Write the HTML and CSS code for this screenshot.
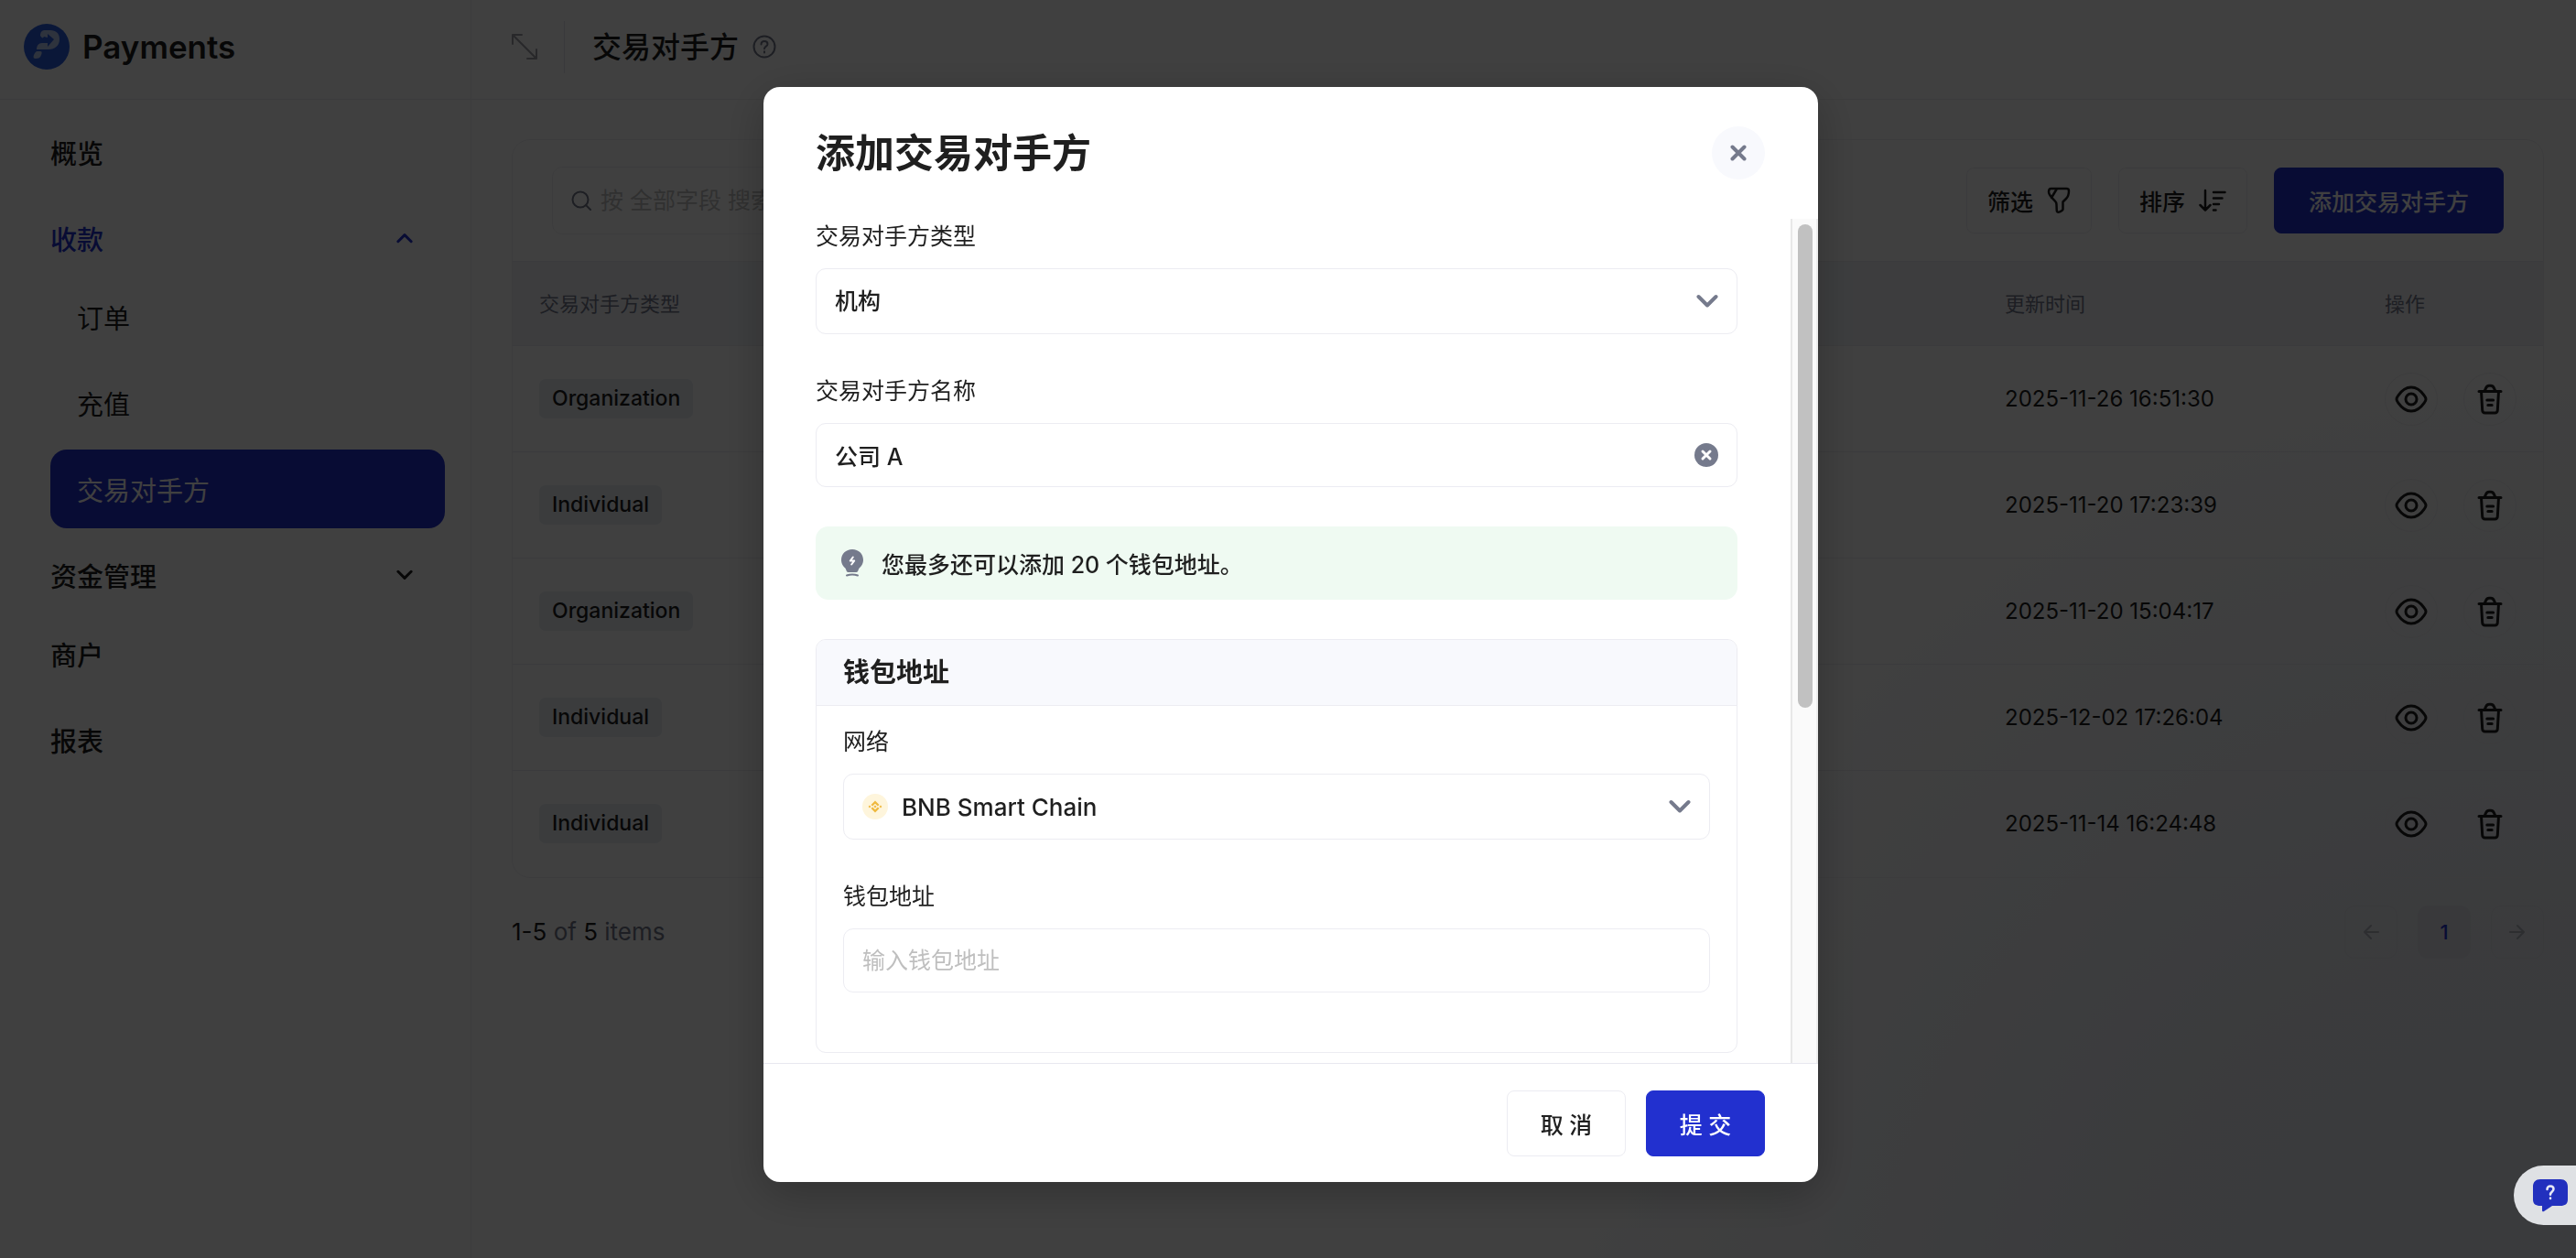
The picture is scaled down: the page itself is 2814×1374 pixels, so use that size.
FILE: index.html
```html
<!DOCTYPE html>
<html lang="zh-CN">
<head>
  <meta charset="UTF-8" />
  <meta name="viewport" content="width=device-width, initial-scale=1.0"/>
  <title>交易对手方 - Payments</title>
  <link rel="stylesheet" href="styles.css">
</head>

<body>
  <!-- shared icons -->
  <svg width="0" height="0" class="sprite" aria-hidden="true">
    <symbol id="icon-eye" viewBox="0 0 36 30">
      <path d="M2 15c0-1.600.7-2.600 1.700-3.900C6.800 6.600 11.600 2 18 2s11.200 4.600 14.300 9.100c1 1.300 1.700 2.300 1.700 3.900s-.7 2.600-1.700 3.900C29.200 23.400 24.400 28 18 28S6.800 23.400 3.700 18.900C2.700 17.600 2 16.600 2 15z"/>
      <circle cx="18" cy="15" r="6"/>
    </symbol>
    <symbol id="icon-trash" viewBox="0 0 28 34">
      <path d="M2 8.500h24M4.500 8.500l1.200 20.500c.1 1.800 1 3 3 3h10.600c2 0 2.900-1.200 3-3l1.200-20.500M8 8.300l1.700-3.600C10.500 3 11.300 2.300 13 2.300h2c1.700 0 2.500.7 3.300 2.400L20 8.300M10.800 18h6.800M11.800 23.500h4.400"/>
    </symbol>
    <symbol id="icon-chevron" viewBox="0 0 24 16">
      <path d="M2.500 3l9.500 9.500L21.500 3"/>
    </symbol>
  </svg>

  <div class="layout">
    <aside class="sidebar">
      <div class="brand">
        <svg class="logo" viewBox="0 0 50 50">
          <circle cx="25" cy="25" r="25" fill="#2a5ee0"/>
          <path d="M18 13c0-4 2-6 5-6h6c6 0 10 3.500 10 9.500C39 24 34 28 27 28H14c0-4 2-7 6-7h6v4l7-8-7-6v4l-4-1c-1 2-2 2-4-1z" fill="#b9c9f2"/>
          <path d="M15 30h3c2 0 2 2 1 4-1 3-3 4-6 4-2 0-3-1-2-4 1-2 2-4 4-4z" fill="#b9c9f2"/>
        </svg>
        <span>Payments</span>
      </div>
      <nav>
        <a href="#">概览</a>
        <a href="#" class="parent open">收款
          <svg class="caret up"><use href="#icon-chevron"/></svg>
        </a>
        <a href="#" class="sub">订单</a>
        <a href="#" class="sub">充值</a>
        <a href="#" class="sub active">交易对手方</a>
        <a href="#" class="parent">资金管理
          <svg class="caret"><use href="#icon-chevron"/></svg>
        </a>
        <a href="#">商户</a>
        <a href="#">报表</a>
      </nav>
    </aside>

    <main>
      <header>
        <svg class="expand" viewBox="0 0 28 28"><path d="M1 11V1h10M1 1l26 26M17 27h10V17"/></svg>
        <span class="divider"></span>
        <h1>交易对手方</h1>
        <svg class="help" viewBox="0 0 26 26"><circle cx="13" cy="13" r="11.500"/><path d="M9.500 10.500c0-2 1.500-3.500 3.500-3.500s3.500 1.300 3.500 3.200c0 2.300-3.500 2.600-3.500 5M13 18.200v1.300"/></svg>
      </header>

      <div class="content">
        <section class="card">
          <div class="toolbar">
            <div class="search">
              <svg viewBox="0 0 22 22"><circle cx="10" cy="10" r="8.500"/><path d="M16 16l5 5"/></svg>
              <input type="text" placeholder="按 全部字段 搜索" aria-label="搜索">
            </div>
            <button type="button" class="btn">筛选
              <svg class="icon-filter" viewBox="0 0 26 30"><path d="M4.500 2h17C23.500 2 24 3 24 4.500c0 4.500-.5 6-3 8.500l-3.500 3.500v8c0 1.500-5.500 4.500-6.500 2.500-.7-1.500 0-7-.8-9.500-1-3-8.200-7-8.200-12C2 3.500 2.500 2 4.500 2zM11 2L5 12"/></svg>
            </button>
            <button type="button" class="btn">排序
              <svg class="icon-sort" viewBox="0 0 30 26"><path d="M7 2v21M1.500 18L7 23.500 12.500 18M16 4h12.500M16 10.500h9.500M16 17h6M16 23.500h2.500"/></svg>
            </button>
            <button type="button" class="btn btn-primary">添加交易对手方</button>
          </div>

          <table>
            <thead>
              <tr>
                <th class="col-type">交易对手方类型</th>
                <th class="col-time">更新时间</th>
                <th class="col-actions">操作</th>
              </tr>
            </thead>
            <tbody>
              <tr>
                <td><span class="tag">Organization</span></td>
                <td>2025-11-26 16:51:30</td>
                <td><div class="actions">
                  <button type="button" aria-label="查看"><svg class="eye"><use href="#icon-eye"/></svg></button>
                  <button type="button" aria-label="删除"><svg class="trash"><use href="#icon-trash"/></svg></button>
                </div></td>
              </tr>
              <tr>
                <td><span class="tag">Individual</span></td>
                <td>2025-11-20 17:23:39</td>
                <td><div class="actions">
                  <button type="button" aria-label="查看"><svg class="eye"><use href="#icon-eye"/></svg></button>
                  <button type="button" aria-label="删除"><svg class="trash"><use href="#icon-trash"/></svg></button>
                </div></td>
              </tr>
              <tr>
                <td><span class="tag">Organization</span></td>
                <td>2025-11-20 15:04:17</td>
                <td><div class="actions">
                  <button type="button" aria-label="查看"><svg class="eye"><use href="#icon-eye"/></svg></button>
                  <button type="button" aria-label="删除"><svg class="trash"><use href="#icon-trash"/></svg></button>
                </div></td>
              </tr>
              <tr>
                <td><span class="tag">Individual</span></td>
                <td>2025-12-02 17:26:04</td>
                <td><div class="actions">
                  <button type="button" aria-label="查看"><svg class="eye"><use href="#icon-eye"/></svg></button>
                  <button type="button" aria-label="删除"><svg class="trash"><use href="#icon-trash"/></svg></button>
                </div></td>
              </tr>
              <tr>
                <td><span class="tag">Individual</span></td>
                <td>2025-11-14 16:24:48</td>
                <td><div class="actions">
                  <button type="button" aria-label="查看"><svg class="eye"><use href="#icon-eye"/></svg></button>
                  <button type="button" aria-label="删除"><svg class="trash"><use href="#icon-trash"/></svg></button>
                </div></td>
              </tr>
            </tbody>
          </table>
        </section>

        <div class="pagination">
          <p><b>1-5</b> of <b>5</b> items</p>
          <button type="button" aria-label="上一页"><svg viewBox="0 0 18 18"><path d="M17 9H2M9 2L2 9l7 7"/></svg></button>
          <button type="button" class="current">1</button>
          <button type="button" aria-label="下一页"><svg viewBox="0 0 18 18"><path d="M1 9h15M9 2l7 7-7 7"/></svg></button>
        </div>
      </div>
    </main>
  </div>

  <div class="overlay">
    <form class="modal" role="dialog" aria-labelledby="modal-title">
      <div class="modal-header">
        <h2 id="modal-title">添加交易对手方</h2>
        <button type="button" class="close" aria-label="关闭"><svg viewBox="0 0 18 18"><path d="M2.500 2.500l13 13M15.500 2.500l-13 13"/></svg></button>
      </div>

      <div class="modal-body">
        <div class="fields">
          <div class="field">
            <label for="type">交易对手方类型</label>
            <div class="control select">
              <select id="type"><option>机构</option><option>个人</option></select>
              <svg class="arrow"><use href="#icon-chevron"/></svg>
            </div>
          </div>

          <div class="field">
            <label for="name">交易对手方名称</label>
            <div class="control">
              <input type="text" id="name" value="公司 A">
              <svg class="clear" viewBox="0 0 26 26"><circle cx="13" cy="13" r="13"/><path d="M9 9l8 8M17 9l-8 8"/></svg>
            </div>
          </div>

          <div class="notice">
            <svg viewBox="0 0 24 30">
              <path d="M12 0C5 0 0 5 0 11.500c0 4.500 2.300 7 4.300 9C5.500 22 5.500 25 7.500 25h9c2 0 2-3 3.200-4.500 2-2 4.300-4.500 4.300-9C24 5 19 0 12 0z" fill="#757a8c"/>
              <path d="M6 28.500c4-1.300 8-1.300 12 0" fill="none" stroke="#757a8c" stroke-width="2" stroke-linecap="round"/>
              <path d="M12.800 8.500l-3 4h4.400l-3 4" fill="none" stroke="#fff" stroke-width="2" stroke-linecap="round" stroke-linejoin="round"/>
            </svg>
            您最多还可以添加 20 个钱包地址。
          </div>

          <section class="wallet">
            <h3>钱包地址</h3>
            <div class="wallet-body">
              <div class="field">
                <label for="network">网络</label>
                <div class="control select">
                  <svg class="bnb" viewBox="0 0 28 28">
                    <circle cx="14" cy="14" r="14" fill="#fef5dc"/>
                    <path d="M9.500 12L14 7.500l4.500 4.500-1.600 1.600L14 10.700l-2.900 2.900zM9.500 16l1.600-1.600 2.900 2.900 2.900-2.900 1.600 1.600-4.500 4.500zM14 12.400l1.600 1.600-1.600 1.600-1.600-1.600zM8 12.600L9.400 14 8 15.400 6.600 14zM20 12.600l1.400 1.400-1.400 1.400-1.400-1.400z" fill="#efb93f"/>
                  </svg>
                  <select id="network"><option>BNB Smart Chain</option></select>
                  <svg class="arrow"><use href="#icon-chevron"/></svg>
                </div>
              </div>
              <div class="field">
                <label for="address">钱包地址</label>
                <div class="control">
                  <input type="text" id="address" placeholder="输入钱包地址">
                </div>
              </div>
            </div>
          </section>
        </div>
        <div class="scrollbar"><div class="thumb"></div></div>
      </div>

      <div class="modal-footer">
        <button type="button" class="btn">取 消</button>
        <button type="submit" class="btn btn-primary">提 交</button>
      </div>
    </form>
  </div>

  <button type="button" class="chat" aria-label="帮助">
    <svg viewBox="0 0 38 36">
      <path d="M8 0h22c5 0 8 3 8 8v14c0 5-3 7-8 7h-9l-9 6c-1 .7-2 .3-2-1v-5H8c-5 0-8-2-8-7V8c0-5 3-8 8-8z" fill="#2230be"/>
      <path d="M15.500 11c0-2 1.500-3.500 3.500-3.500s3.500 1.300 3.500 3.300c0 2.700-3.500 2.700-3.500 6M19 20.500v.5" fill="none" stroke="#e6e8f5" stroke-width="2.500" stroke-linecap="round"/>
    </svg>
  </button>
</body>
</html>
```

FILE: styles.css
```css
* {
  box-sizing: border-box;
}
body {
  margin: 0;
  font-family: Inter, "Noto Sans CJK SC", sans-serif;
  font-size: 25px;
  color: #1f1f1f;
  background: radial-gradient(circle at 100% 110%, #e4e8f0 0, #e9ecf3 500px, #fff 1150px);
}
.sprite {
  position: absolute;
}
svg {
  flex: none;
  fill: none;
  stroke-linecap: round;
  stroke-linejoin: round;
}
button, input, select {
  font: inherit;
  color: inherit;
}
button {
  padding: 0;
  cursor: pointer;
}

/* sidebar */
.layout {
  display: flex;
  min-height: 100vh;
}
.sidebar {
  flex: none;
  width: 515px;
  border-right: 1px solid #f0f0f4;
}
.brand {
  display: flex;
  align-items: center;
  gap: 14px;
  height: 109px;
  padding: 0 26px 6px;
  border-bottom: 1px solid #ececf2;
  font-size: 35px;
  font-weight: 600;
}
.logo {
  width: 50px;
  height: 50px;
}
nav {
  padding: 14px 28px 14px 55px;
}
nav a {
  display: flex;
  align-items: center;
  justify-content: space-between;
  height: 86px;
  margin-bottom: 8px;
  font-size: 29px;
  font-weight: 500;
  color: #1f1f1f;
  text-decoration: none;
  border-radius: 18px;
}
nav .parent {
  margin-bottom: 0;
  padding-right: 35px;
}
nav .open {
  color: #2230cf;
}
nav .sub {
  padding-left: 29px;
  font-weight: 400;
}
nav .active {
  background: #2230cf;
  color: #fff;
}
.caret {
  width: 18px;
  height: 12px;
  stroke: currentColor;
  stroke-width: 4;
}
.up {
  transform: rotate(180deg);
}

/* page header */
main {
  flex: 1;
  min-width: 0;
}
header {
  display: flex;
  align-items: center;
  height: 109px;
  padding: 0 44px 6px;
  border-bottom: 1px solid #ececf2;
}
.expand {
  width: 28px;
  height: 28px;
  stroke: #a0a0a8;
  stroke-width: 2;
}
.divider {
  width: 1px;
  height: 57px;
  margin: 0 30px 0 29px;
  background: #e4e4ea;
}
h1 {
  margin: 0 15px 0 0;
  padding-bottom: 4px;
  font-size: 32px;
  font-weight: 500;
}
.help {
  width: 26px;
  height: 26px;
  stroke: #757a8c;
  stroke-width: 2;
}

/* table card */
.content {
  padding: 43px 35px 30px 44px;
}
.card {
  border: 1px solid #f0f0f4;
  border-radius: 20px;
}
.toolbar {
  display: flex;
  align-items: center;
  gap: 29px;
  padding: 29px 43px;
}
.search {
  display: flex;
  align-items: center;
  gap: 8px;
  width: 620px;
  height: 74px;
  margin-right: auto;
  padding: 0 20px;
  border: 1px solid #f0f0f4;
  border-radius: 11px;
}
.search svg {
  width: 22px;
  height: 22px;
  stroke: #757a8c;
  stroke-width: 2;
}
.search input {
  flex: 1;
  border: none;
  background: none;
}
input::placeholder {
  color: #bfbfbf;
  opacity: 1;
}
.btn {
  display: flex;
  align-items: center;
  justify-content: center;
  gap: 15px;
  height: 72px;
  padding: 0 22px;
  background: none;
  border: 1px solid #ececf2;
  border-radius: 8px;
  font-weight: 500;
}
.btn svg {
  stroke: currentColor;
  stroke-width: 2.5;
}
.icon-filter {
  width: 26px;
  height: 30px;
}
.icon-sort {
  width: 30px;
  height: 26px;
}
.btn-primary {
  padding: 0 37px;
  background: #2230cf;
  border-color: #2230cf;
  color: #fff;
}
table {
  width: 100%;
  border-collapse: collapse;
}
th {
  height: 92px;
  padding: 0 29px 4px;
  background: #f3f4f8;
  border: solid #ececf2;
  border-width: 1px 0;
  font-size: 22px;
  font-weight: 400;
  text-align: left;
  color: #757a8c;
}
td {
  height: 116px;
  padding: 0 29px;
  border-bottom: 1px solid #ececf2;
}
tbody tr:last-child td {
  border-bottom: none;
}
td:nth-child(2) {
  font-size: 24px;
}
.col-time {
  width: 415px;
}
.col-actions {
  width: 202px;
}
.tag {
  display: inline-block;
  padding: 0 14px;
  line-height: 43px;
  font-size: 23px;
  font-weight: 500;
  background: #e9edf4;
  border-radius: 7px;
}
.actions {
  display: flex;
  gap: 28px;
}
.actions button {
  display: grid;
  place-items: center;
  flex: none;
  width: 58px;
  height: 58px;
  background: none;
  border: 1px solid #f0f0f4;
  border-radius: 50%;
}
.actions svg {
  stroke: #1f1f1f;
  stroke-width: 3;
}
.eye {
  width: 36px;
  height: 30px;
}
.trash {
  width: 28px;
  height: 34px;
}

/* pagination */
.pagination {
  display: flex;
  align-items: center;
  gap: 22px;
  margin-top: 30px;
}
.pagination p {
  margin: 0 auto 0 0;
  font-size: 26px;
  color: #757a8c;
}
.pagination b {
  font-weight: 400;
  color: #1f1f1f;
}
.pagination button {
  display: grid;
  place-items: center;
  width: 58px;
  height: 58px;
  background: none;
  border: 1px solid #e4e6ec;
  border-radius: 11px;
}
.pagination svg {
  width: 18px;
  height: 18px;
  stroke: #b4b6be;
  stroke-width: 2;
}
.pagination .current {
  font-size: 22px;
  font-weight: 500;
  color: #2230cf;
  background: #e2e4ea;
}

/* dialog */
.overlay {
  position: fixed;
  inset: 0;
  padding: 95px 0 83px 6px;
  background: rgba(0, 0, 0, 0.75);
}
.modal {
  display: flex;
  flex-direction: column;
  width: 1152px;
  max-width: 100%;
  height: 100%;
  margin: 0 auto;
  background: #fff;
  border-radius: 18px;
  box-shadow: 0 12px 50px rgba(0, 0, 0, 0.25);
  overflow: hidden;
}
.modal-header {
  display: flex;
  flex: none;
  align-items: center;
  justify-content: space-between;
  height: 144px;
  padding: 0 58px 0 57px;
}
h2 {
  margin: 0;
  padding-bottom: 6px;
  font-size: 43px;
  font-weight: 700;
}
.close {
  display: grid;
  place-items: center;
  width: 58px;
  height: 58px;
  background: #f8f9fd;
  border: none;
  border-radius: 50%;
}
.close svg {
  width: 18px;
  height: 18px;
  stroke: #757a8c;
  stroke-width: 4;
}
.modal-body {
  display: flex;
  flex: 1;
  min-height: 0;
}
.fields {
  flex: 1;
  padding: 0 58px 0 57px;
  overflow: hidden;
}
.field {
  margin-bottom: 43px;
}
label {
  display: block;
  margin-bottom: 16px;
  line-height: 38px;
}
.control {
  display: flex;
  align-items: center;
  height: 70px;
  padding: 0 20px;
  border: 1px solid #ececf2;
  border-radius: 11px;
}
.control.select {
  height: 72px;
}
.control input, .control select {
  flex: 1;
  min-width: 0;
  height: 100%;
  padding: 0;
  border: none;
  background: none;
  outline: none;
  appearance: none;
  font-weight: 500;
}
.control input::placeholder {
  font-weight: 400;
}
.control #network {
  font-size: 26px;
}
.arrow {
  width: 24px;
  height: 16px;
  stroke: #757a8c;
  stroke-width: 4;
}
.clear {
  width: 26px;
  height: 26px;
}
.clear circle {
  fill: #757a8c;
}
.clear path {
  stroke: #fff;
  stroke-width: 3;
}
.bnb {
  width: 28px;
  height: 28px;
  margin-right: 15px;
}
.notice {
  display: flex;
  align-items: center;
  gap: 20px;
  height: 80px;
  margin-bottom: 43px;
  padding: 0 28px;
  background: #effaf2;
  border-radius: 14px;
  font-weight: 500;
}
.notice svg {
  width: 24px;
  height: 30px;
}
.wallet {
  border: 1px solid #ececf2;
  border-radius: 11px;
  overflow: hidden;
}
h3 {
  margin: 0;
  padding: 0 29px;
  font-size: 29px;
  font-weight: 600;
  line-height: 71px;
  background: #f8f9fd;
  border-bottom: 1px solid #ececf2;
}
.wallet-body {
  padding: 20px 29px 22px;
}
.scrollbar {
  flex: none;
  width: 30px;
  padding: 6px;
  background: #fafafa;
  border-left: 2px solid #e8e8e8;
  border-right: 2px solid #eeeeee;
}
.thumb {
  width: 16px;
  height: 58%;
  background: #c1c1c1;
  border-radius: 8px;
}
.modal-footer {
  display: flex;
  flex: none;
  align-items: center;
  justify-content: flex-end;
  gap: 22px;
  height: 130px;
  padding: 0 58px;
  border-top: 1px solid #e8e8f0;
}
.modal-footer .btn {
  width: 130px;
  padding: 0;
}

/* help widget */
.chat {
  position: fixed;
  right: 0;
  bottom: 36px;
  display: flex;
  align-items: center;
  height: 65px;
  padding: 0 9px 0 21px;
  background: #dfe1e4;
  border: none;
  border-radius: 33px 0 0 33px;
}
.chat svg {
  width: 38px;
  height: 36px;
}
```
